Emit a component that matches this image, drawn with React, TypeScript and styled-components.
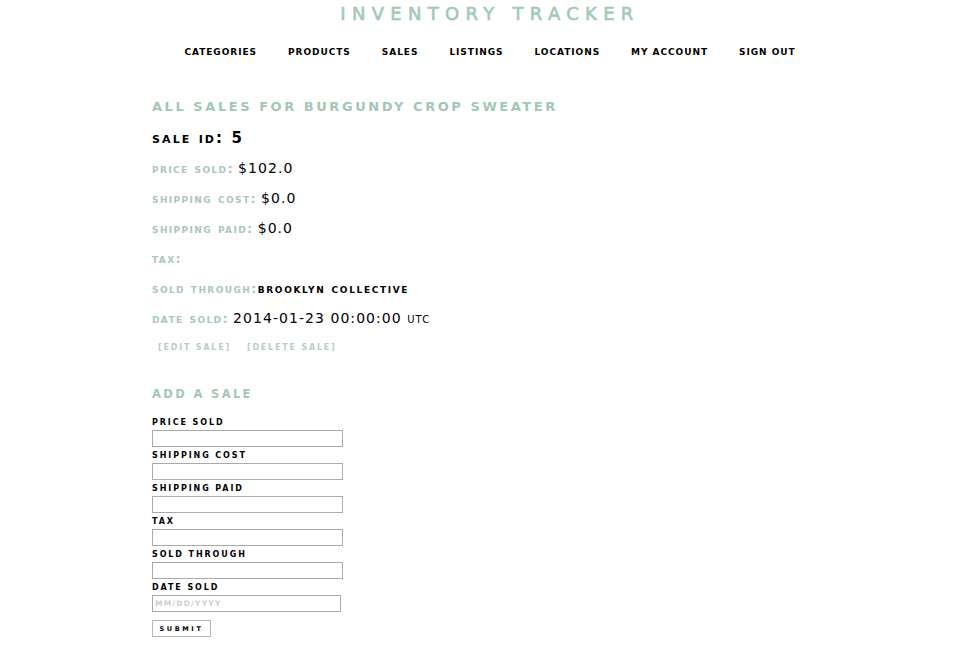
import React from "react";
import styled, { createGlobalStyle } from "styled-components";

const Global = createGlobalStyle`
  html, body { margin: 0; padding: 0; background: #fff; }
  body { font-family: "DejaVu Sans", "Liberation Sans", sans-serif; color: #000; }
`;

const SAGE = "#a3c7b4";
const LABEL = "#aac7b8";

const Page = styled.div`
  width: 980px;
  min-height: 653px;
`;

const Title = styled.h1`
  margin: 0;
  height: 28px;
  text-align: center;
  font-size: 18px;
  font-weight: normal;
  line-height: 28px;
  letter-spacing: 6.3px;
  color: #a2c9b4;
  text-transform: uppercase;
  -webkit-text-stroke: 0.6px #a2c9b4;
`;

const Nav = styled.nav`
  margin-top: 17px;
  height: 14px;
  display: flex;
  justify-content: center;
  gap: 31px;
`;

const NavLink = styled.a`
  font-size: 9px;
  font-weight: bold;
  line-height: 14px;
  letter-spacing: 0.95px;
  color: #000;
  text-decoration: none;
  text-transform: uppercase;
`;

const Content = styled.main`
  padding-left: 152px;
  margin-top: 35px;
`;

const Heading = styled.h2`
  margin: 0;
  height: 24px;
  font-size: 13px;
  font-weight: bold;
  line-height: 26px;
  letter-spacing: 2.55px;
  color: ${SAGE};
  text-transform: uppercase;
  white-space: nowrap;
`;

const Details = styled.div`
  margin-top: 5px;
`;

const Row = styled.div`
  height: 30px;
  line-height: 30px;
  white-space: nowrap;
  font-variant: small-caps;
  text-transform: lowercase;
`;

const SaleId = styled(Row)`
  font-size: 15px;
  font-weight: bold;
  letter-spacing: 2.1px;
`;

const Label = styled.span`
  font-size: 13px;
  font-weight: bold;
  letter-spacing: 1.4px;
  color: ${LABEL};
`;

const Value = styled.span<{ $tight?: boolean }>`
  font-size: ${(p) => (p.$tight ? "13px" : "14px")};
  font-weight: ${(p) => (p.$tight ? "bold" : "normal")};
  letter-spacing: ${(p) => (p.$tight ? "1.65px" : "1.05px")};
  color: #000;
  margin-left: ${(p) => (p.$tight ? "0" : "4px")};
`;

const Links = styled.div`
  height: 30px;
  line-height: 30px;
  padding-left: 6px;
  display: flex;
  gap: 16px;
`;

const ActionLink = styled.a`
  font-size: 8px;
  font-weight: bold;
  letter-spacing: 1.8px;
  color: #b5cfc2;
  text-decoration: none;
  text-transform: uppercase;
`;

const SubHeading = styled(Heading)`
  margin-top: 18px;
  font-size: 11.5px;
  letter-spacing: 2.35px;
`;

const Form = styled.form`
  margin-top: 9px;
  display: flex;
  flex-direction: column;
  align-items: flex-start;
`;

const FieldLabel = styled.label`
  display: block;
  height: 16px;
  font-size: 8px;
  font-weight: bold;
  line-height: 17px;
  letter-spacing: 1.9px;
  text-transform: uppercase;
  color: #000;
`;

const Input = styled.input<{ $w?: number }>`
  box-sizing: border-box;
  width: ${(p) => p.$w ?? 191}px;
  height: 17px;
  margin: 0;
  padding: 1px 2px;
  border: 1px solid #a9a9a9;
  font-family: "DejaVu Sans", sans-serif;
  font-size: 7.5px;
  font-weight: bold;
  letter-spacing: 1.2px;
  &::placeholder { color: #cfcfcf; text-transform: uppercase; }
`;

const Submit = styled.button`
  margin-top: 8px;
  box-sizing: border-box;
  width: 59px;
  height: 17px;
  padding: 0;
  border: 1px solid #b8b8b8;
  background: #fff;
  font-family: "DejaVu Sans", sans-serif;
  font-size: 6.5px;
  font-weight: bold;
  letter-spacing: 2.6px;
  color: #000;
  text-transform: uppercase;
`;

const navItems = ["Categories", "Products", "Sales", "Listings", "Locations", "My Account", "Sign Out"];
const fields = ["Price sold", "Shipping cost", "Shipping paid", "Tax", "Sold through"];

export default function App() {
  return (
    <Page>
      <Global />
      <Title>Inventory Tracker</Title>
      <Nav>
        {navItems.map((n) => (
          <NavLink key={n} href="#">{n}</NavLink>
        ))}
      </Nav>
      <Content>
        <Heading>All Sales for Burgundy Crop Sweater</Heading>
        <Details>
          <SaleId>SALE ID: 5</SaleId>
          <Row><Label>Price sold:</Label><Value>$102.0</Value></Row>
          <Row><Label>Shipping cost:</Label><Value>$0.0</Value></Row>
          <Row><Label>Shipping paid:</Label><Value>$0.0</Value></Row>
          <Row><Label>Tax:</Label></Row>
          <Row><Label>Sold through:</Label><Value $tight>Brooklyn Collective</Value></Row>
          <Row><Label>Date sold:</Label><Value>2014-01-23 00:00:00 utc</Value></Row>
          <Links>
            <ActionLink href="#">[Edit Sale]</ActionLink>
            <ActionLink href="#">[Delete Sale]</ActionLink>
          </Links>
        </Details>
        <SubHeading>Add a Sale</SubHeading>
        <Form onSubmit={(e) => e.preventDefault()}>
          {fields.map((f) => (
            <React.Fragment key={f}>
              <FieldLabel>{f}</FieldLabel>
              <Input type="text" />
            </React.Fragment>
          ))}
          <FieldLabel>Date sold</FieldLabel>
          <Input type="text" placeholder="mm/dd/yyyy" $w={189} />
          <Submit type="submit">Submit</Submit>
        </Form>
      </Content>
    </Page>
  );
}
